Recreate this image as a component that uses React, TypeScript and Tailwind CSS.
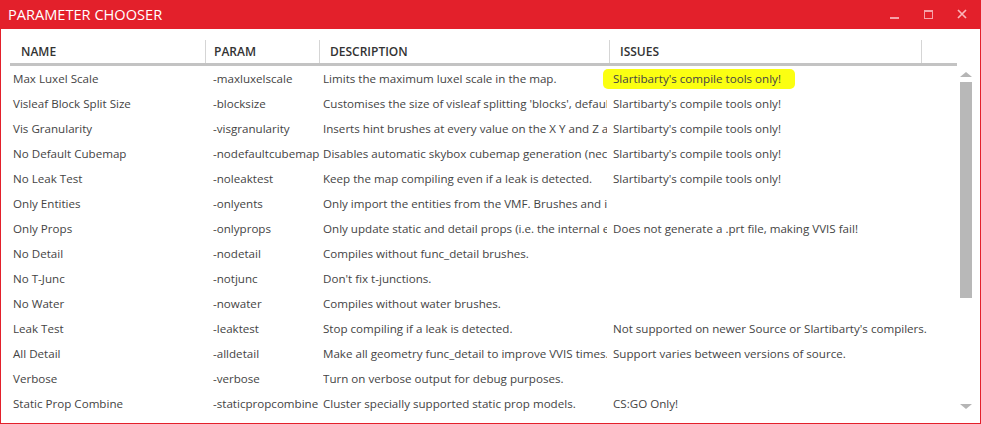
import React from 'react';

type Row = { name: string; param: string; desc: string; issues?: string; mark?: boolean };

const rows: Row[] = [
  { name: 'Max Luxel Scale', param: '-maxluxelscale', desc: 'Limits the maximum luxel scale in the map.', issues: "Slartibarty's compile tools only!", mark: true },
  { name: 'Visleaf Block Split Size', param: '-blocksize', desc: "Customises the size of visleaf splitting 'blocks', default 1024.", issues: "Slartibarty's compile tools only!" },
  { name: 'Vis Granularity', param: '-visgranularity', desc: 'Inserts hint brushes at every value on the X Y and Z axis.', issues: "Slartibarty's compile tools only!" },
  { name: 'No Default Cubemap', param: '-nodefaultcubemap', desc: 'Disables automatic skybox cubemap generation (necessary).', issues: "Slartibarty's compile tools only!" },
  { name: 'No Leak Test', param: '-noleaktest', desc: 'Keep the map compiling even if a leak is detected.', issues: "Slartibarty's compile tools only!" },
  { name: 'Only Entities', param: '-onlyents', desc: 'Only import the entities from the VMF. Brushes and internal entities are kept.' },
  { name: 'Only Props', param: '-onlyprops', desc: 'Only update static and detail props (i.e. the internal entities).', issues: 'Does not generate a .prt file, making VVIS fail!' },
  { name: 'No Detail', param: '-nodetail', desc: 'Compiles without func_detail brushes.' },
  { name: 'No T-Junc', param: '-notjunc', desc: "Don't fix t-junctions." },
  { name: 'No Water', param: '-nowater', desc: 'Compiles without water brushes.' },
  { name: 'Leak Test', param: '-leaktest', desc: 'Stop compiling if a leak is detected.', issues: "Not supported on newer Source or Slartibarty's compilers." },
  { name: 'All Detail', param: '-alldetail', desc: 'Make all geometry func_detail to improve VVIS times.', issues: 'Support varies between versions of source.' },
  { name: 'Verbose', param: '-verbose', desc: 'Turn on verbose output for debug purposes.' },
  { name: 'Static Prop Combine', param: '-staticpropcombine', desc: 'Cluster specially supported static prop models.', issues: 'CS:GO Only!' },
];

const cols = 'grid grid-cols-[200px_110px_290px_1fr]';

export default function App() {
  return (
    <div className="w-[981px] h-[424px] bg-white border border-[#e3202b] flex flex-col font-['Segoe_UI','Open_Sans',sans-serif] text-[11.6px] text-[#444]">
      <div className="h-[29px] -mx-px -mt-px bg-[#e3202b] flex items-center justify-between shrink-0">
        <span className="pl-[8px] text-white text-[14.6px]">PARAMETER CHOOSER</span>
        <div className="flex items-center h-full pr-[2px]">
          <div className="w-[34px] flex justify-center">
            <div className="w-[9px] h-[2px] bg-[#f6a1a8] mt-[6px]" />
          </div>
          <div className="w-[34px] flex justify-center">
            <div className="w-[9px] h-[9px] border border-[#f6a1a8] border-t-2 -mt-[1px]" />
          </div>
          <div className="w-[34px] flex justify-center">
            <svg width="10" height="10" viewBox="0 0 10 10" className="-mt-[1px]">
              <path d="M1 1L9 9M9 1L1 9" stroke="#fbb5ba" strokeWidth="1.7" />
            </svg>
          </div>
        </div>
      </div>

      <div className="flex flex-1 pl-[9px] pt-[11px] min-h-0">
        <div className="w-[947px] flex flex-col">
          <div className={`${cols} h-[26px] border-b-[3px] border-[#c3c3c3] font-semibold text-[#333] text-[12px]`}>
            <div className="pl-[11px] flex items-center border-r border-[#d5d5d5] mr-[4px]">NAME</div>
            <div className="pl-[8px] flex items-center border-r border-[#d5d5d5] -ml-[4px]">PARAM</div>
            <div className="pl-[10px] flex items-center border-r border-[#d5d5d5]">DESCRIPTION</div>
            <div className="flex">
              <div className="w-[312px] pl-[10px] flex items-center border-r border-[#d5d5d5]">ISSUES</div>
            </div>
          </div>
          {rows.map((r) => (
            <div key={r.param} className={`${cols} h-[25px] whitespace-nowrap`}>
              <div className="pl-[3px] overflow-hidden flex items-center">{r.name}</div>
              <div className="pl-[3px] flex items-center">{r.param}</div>
              <div className="ml-[3px] mr-[3px] overflow-hidden flex items-center">{r.desc}</div>
              <div className="pl-[3px] relative flex items-center">
                {r.mark && (
                  <span className="absolute left-[-7px] top-[3px] w-[192px] h-[20px] bg-[#fbff12] rounded-[5px]" />
                )}
                <span className="relative">{r.issues}</span>
              </div>
            </div>
          ))}
        </div>

        <div className="w-[14px] ml-[2px] mt-[32px] flex flex-col items-center">
          <div className="w-0 h-0 border-l-[6px] border-r-[6px] border-b-[5px] border-l-transparent border-r-transparent border-b-[#b5b5b5]" />
          <div className="w-[12px] h-[216px] bg-[#b8b8b8] mt-[5px]" />
          <div className="flex-1" />
          <div className="w-0 h-0 border-l-[6px] border-r-[6px] border-t-[5px] border-l-transparent border-r-transparent border-t-[#b5b5b5] mb-[14px]" />
        </div>
      </div>
    </div>
  );
}
